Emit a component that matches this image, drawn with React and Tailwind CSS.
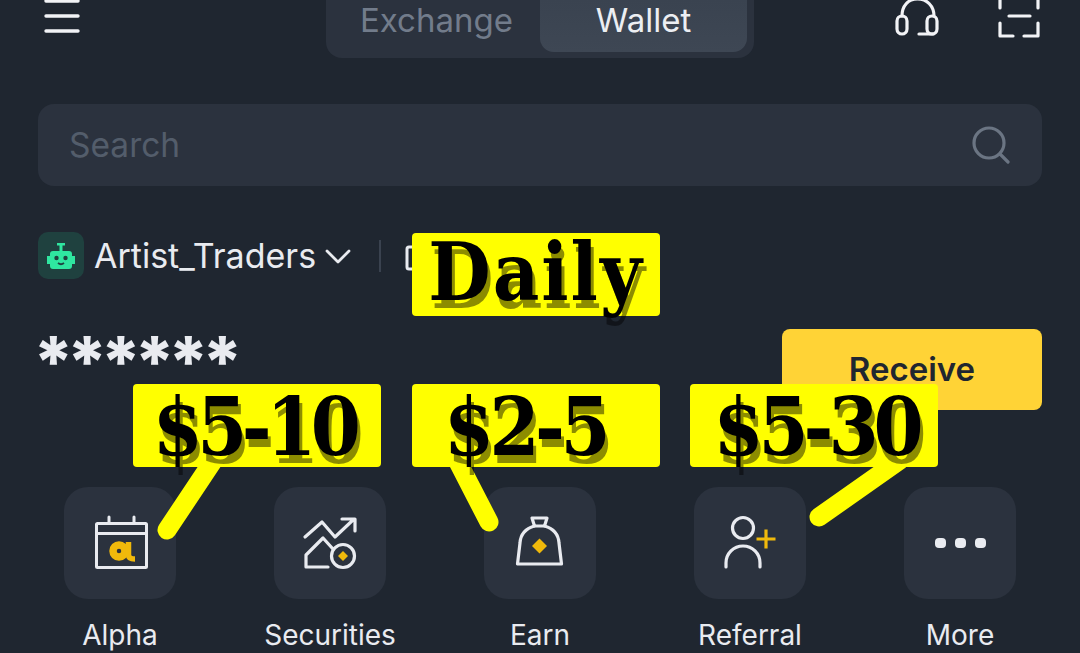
import React from "react";

const GOLD = "#f0b90b";
const LINE = "#e9ebf0";

const AlphaIcon = () => (
  <svg viewBox="0 0 64 64" className="w-16 h-16" fill="none" stroke={LINE} strokeWidth="3" strokeLinecap="round" strokeLinejoin="round">
    <rect x="8.5" y="12.5" width="50" height="44" rx="1" />
    <path d="M8.5 22.5h50M21 6v6M46 6v6" />
    <circle cx="31" cy="40" r="6" stroke={GOLD} strokeWidth="7.500" />
    <path d="M40.500 31v13q0 4 6.500 4" stroke={GOLD} strokeWidth="5.500" strokeLinecap="butt" />
  </svg>
);

const SecuritiesIcon = () => (
  <svg viewBox="0 0 64 64" className="w-16 h-16" fill="none" stroke={LINE} strokeWidth="3.2" strokeLinecap="round" strokeLinejoin="round">
    <path d="M7 26L24 11l13 15L55 9M44 8h13v12" />
    <path d="M30 56H8V44l17-17 10 11" />
    <circle cx="45" cy="45" r="11.5" />
    <path d="M45 40l5 5-5 5-5-5z" fill={GOLD} stroke="none" />
  </svg>
);

const EarnIcon = () => (
  <svg viewBox="0 0 64 64" className="w-16 h-16" fill="none" stroke={LINE} strokeWidth="3.2" strokeLinecap="round" strokeLinejoin="round">
    <path d="M24 7h15l-2.5 8h-10z" />
    <path d="M26.5 15C16 18 12.5 24 12 32L9.5 53h44L51 32c-.5-8-4-14-14.500-17" />
    <path d="M31.500 27.500l7.500 7.500-7.500 7.500-7.500-7.500z" fill={GOLD} stroke="none" />
  </svg>
);

const ReferralIcon = () => (
  <svg viewBox="0 0 64 64" className="w-16 h-16" fill="none" stroke={LINE} strokeWidth="3.2" strokeLinecap="round" strokeLinejoin="round">
    <circle cx="25" cy="17" r="10.500" />
    <path d="M8 56V52a17 17 0 0 1 34 0v4" />
    <path d="M38.500 28h19M48 18.500v19" stroke={GOLD} strokeLinecap="butt" />
  </svg>
);

const MoreIcon = () => (
  <div className="flex gap-[9px]">
    <span className="w-[11px] h-[10px] rounded-[4px] bg-[#e9ebf0]" />
    <span className="w-[11px] h-[10px] rounded-[4px] bg-[#e9ebf0]" />
    <span className="w-[11px] h-[10px] rounded-[4px] bg-[#e9ebf0]" />
  </div>
);

const shortcuts = [
  { label: "Alpha", icon: <AlphaIcon /> },
  { label: "Securities", icon: <SecuritiesIcon /> },
  { label: "Earn", icon: <EarnIcon /> },
  { label: "Referral", icon: <ReferralIcon /> },
  { label: "More", icon: <MoreIcon /> },
];

const Tag = ({ className, children }) => (
  <div className={`absolute w-[248px] h-[83px] rounded-[4px] bg-[#ffff00] flex items-center justify-center text-black font-bold whitespace-pre [font-family:'DejaVu_Serif',serif] [font-stretch:condensed] text-[80px] leading-none [text-shadow:3px_8px_0_rgba(0,0,0,0.45)] ${className}`}>
    {children}
  </div>
);

export default function App() {
  return (
    <div className="relative w-[1080px] h-[653px] overflow-hidden bg-[#1f2630] text-[#e9ebf0] [font-family:Inter,sans-serif]">
      {/* Header, cut off by the top of the screenshot */}
      <div className="flex items-start h-[58px]">
        <div className="w-[326px] pl-[44px]">
          <svg viewBox="0 0 36 34" className="w-9 h-[34px]" stroke="#f2f3f6" strokeWidth="3.4" strokeLinecap="round">
            <path d="M2 1h32M2 16h32M2 31h32" />
          </svg>
        </div>
        <div className="w-[428px] h-[58px] flex justify-between px-[7px] pb-[6px] rounded-b-[16px] bg-[#2b323e] text-[33px]">
          <div className="w-[207px] flex items-center justify-center pb-[10px] text-[#727c8b]">Exchange</div>
          <div className="w-[207px] flex items-center justify-center pb-[10px] rounded-b-[14px] bg-gradient-to-b from-[#3a4350] to-[#3e4754] text-[#eceef2]">Wallet</div>
        </div>
        <div className="flex-1 flex justify-end gap-[56px] pr-[40px]">
          <svg viewBox="0 0 46 38" className="w-[46px] h-[38px]" fill="none" stroke="#f2f3f6" strokeWidth="3.2" strokeLinecap="round">
            <path d="M8 16C8 6 14-1 23.500-1S40 6 40 16" />
            <rect x="3" y="16" width="10" height="18" rx="5" />
            <rect x="33" y="16" width="10" height="18" rx="5" />
            <path d="M25 34h14" />
          </svg>
          <svg viewBox="0 0 44 38" className="w-[44px] h-[38px]" fill="none" stroke="#f2f3f6" strokeWidth="3.2" strokeLinecap="round" strokeLinejoin="round">
            <path d="M4 0v8M42 0v8M13 16h21M4 23v13h13M42 23v13H28" />
          </svg>
        </div>
      </div>

      {/* Search */}
      <div className="mx-[38px] mt-[46px] h-[82px] rounded-[16px] bg-[#2b323e] flex items-center justify-between pl-[31px] pr-[32px]">
        <span className="text-[33.500px] text-[#535d6b]">Search</span>
        <svg viewBox="0 0 38 38" className="w-[38px] h-[38px]" fill="none" stroke="#6b7583" strokeWidth="3.200" strokeLinecap="round">
          <circle cx="17" cy="17" r="15" />
          <path d="M28 28l8 8" />
        </svg>
      </div>

      {/* Account */}
      <div className="flex items-center h-[47px] mt-[46px] pl-[38px]">
        <div className="w-[46px] h-[47px] rounded-[10px] bg-[#1f413f] flex items-center justify-center">
          <svg viewBox="0 0 28 26" className="w-[28px] h-[26px]">
            <path d="M10 0h8v2.500h-2.500V8H22q3 0 3 3v2h3v8h-3v2q0 3-3 3H6q-3 0-3-3v-2H0v-8h3v-2q0-3 3-3h6.500V2.500H10z" fill="#2fe6a0" />
            <circle cx="9.500" cy="15" r="2.200" fill="#1f413f" />
            <circle cx="18.500" cy="15" r="2.200" fill="#1f413f" />
            <path d="M11 20q3 2.500 6 0" fill="none" stroke="#1f413f" strokeWidth="1.800" />
          </svg>
        </div>
        <span className="ml-[10px] text-[34px] leading-none">Artist_Traders</span>
        <svg viewBox="0 0 26 16" className="ml-[9px] w-[26px] h-4" fill="none" stroke="#e9ebf0" strokeWidth="2.800" strokeLinecap="round" strokeLinejoin="round">
          <path d="M2 3l11 11L24 3" />
        </svg>
        <div className="ml-[28px] w-[2px] h-[32px] bg-[#3a424f]" />
        <svg viewBox="0 0 24 26" className="ml-[24px] mt-[5px] w-6 h-[26px]" fill="none" stroke="#e9ebf0" strokeWidth="3">
          <rect x="2" y="2" width="24" height="22" rx="2" />
        </svg>
      </div>

      {/* Balance */}
      <div className="flex items-start justify-between mt-[50px] pl-[38px] pr-[38px]">
        <span className="pt-[3px] text-[70px] leading-[60px] tracking-[-7px] font-extrabold text-[#e9ebf0] -ml-[5px]">******</span>
        <div className="w-[260px] h-[81px] rounded-[8px] bg-[#ffd336] flex items-center justify-center text-[33px] font-semibold text-[#1f2630]">Receive</div>
      </div>

      {/* Shortcuts */}
      <div className="grid grid-cols-5 px-[15px] mt-[77px]">
        {shortcuts.map((s) => (
          <div key={s.label} className="flex flex-col items-center">
            <div className="w-[112px] h-[112px] rounded-[24px] bg-[#2b323e] flex items-center justify-center">
              {s.icon}
            </div>
            <span className="mt-[18px] text-[28px] leading-[36px] text-[#e9ebf0]">{s.label}</span>
          </div>
        ))}
      </div>

      {/* Annotations pasted over the screenshot */}
      <svg viewBox="0 0 1080 653" className="absolute inset-0 w-[1080px] h-[653px]" fill="none" stroke="#ffff00" strokeWidth="19" strokeLinecap="round">
        <path d="M215 458L167 530M456 458L489 522M900 460L819 517" />
      </svg>
      <Tag className="left-[412px] top-[233px] pb-[6px] tracking-[2px]">Daily</Tag>
      <Tag className="left-[133px] top-[384px] pt-[3px] pr-[6px] tracking-[-5.500px]">$5-10</Tag>
      <Tag className="left-[412px] top-[384px] pt-[3px] pr-[22px] tracking-[-4.500px]">$2-5</Tag>
      <Tag className="left-[690px] top-[384px] pt-[3px] pl-[4px] tracking-[-5px]">$5-30</Tag>
    </div>
  );
}
